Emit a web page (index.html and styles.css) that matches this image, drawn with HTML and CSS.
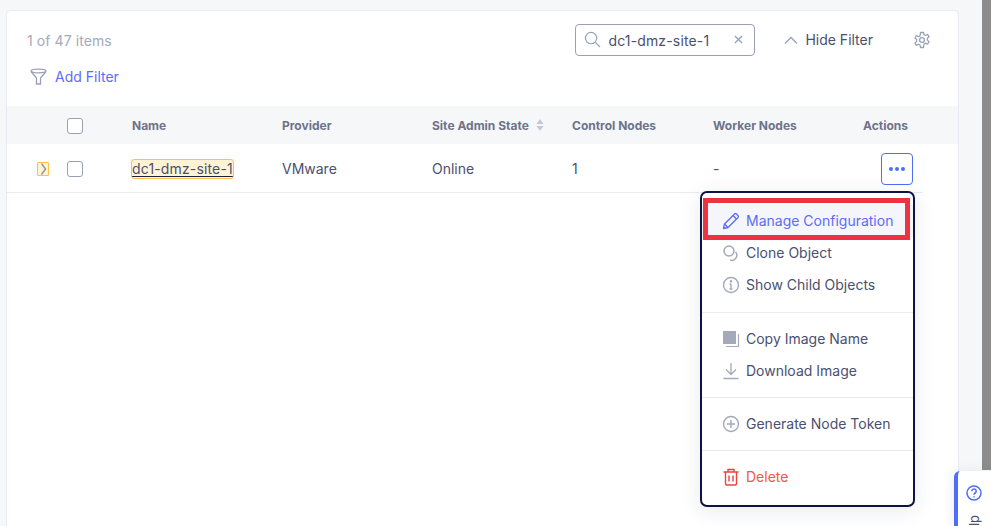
FILE: index.html
```html
<!DOCTYPE html>
<html lang="en">
<head>
    <meta charset="UTF-8">
    <title>Sites</title>
    <link rel="stylesheet" href="styles.css">
</head>
<body>
    <div class="page">
        <div class="card">
            <div class="toolbar">
                <span class="count">1 of 47 items</span>
                <div class="search">
                    <svg class="search-icon" width="17" height="17" viewBox="0 0 18 18" fill="none" stroke="#9aa1b5" stroke-width="1.3"><circle cx="7.5" cy="7.5" r="6"/><path d="M12 12l5 5"/></svg>
                    <span class="search-text">dc1-dmz-site-1</span>
                    <svg class="clear-icon" width="9" height="9" viewBox="0 0 10 10" fill="none" stroke="#9aa1b5" stroke-width="1.5"><path d="M1 1l8 8M9 1l-8 8"/></svg>
                </div>
                <div class="hide-filter">
                    <svg width="14" height="8" viewBox="0 0 14 8" fill="none" stroke="#9aa1b5" stroke-width="1.3"><path d="M1 7.5l6-6 6 6"/></svg>
                    <span>Hide Filter</span>
                </div>
                <svg class="gear" width="18" height="18" viewBox="0 0 24 24" fill="none" stroke="#9aa1b5" stroke-width="1.7" stroke-linejoin="round"><circle cx="12" cy="12" r="3.2"/><path d="M10 2h4l.6 3 2.2 1 2.6-1.600 2 3.400-2.300 2 .1 2.400 2.200 2-2 3.400-2.600-1.500-2.200 1.200L14 22h-4l-.6-3.100-2.200-1.200-2.600 1.500-2-3.400 2.200-2 .1-2.400-2.300-2 2-3.400 2.600 1.600 2.200-1z"/></svg>
            </div>
            <div class="filter-row">
                <svg width="17" height="17" viewBox="0 0 17 17" fill="none" stroke="#9aa1b5" stroke-width="1.3"><ellipse cx="8.500" cy="3" rx="7.500" ry="1.800"/><path d="M1 3.500l5.500 6.500v6h4v-6L16 3.500"/></svg>
                <span class="add-filter">Add Filter</span>
            </div>

            <div class="table-row table-head">
                <span></span>
                <span class="check"></span>
                <span>Name</span>
                <span>Provider</span>
                <span class="sortable">Site Admin State
                    <svg width="8" height="14" viewBox="0 0 8 14" fill="#c3c7d6"><path d="M4 1l3.500 5h-7z"/><path d="M4 13l3.500-5h-7z"/></svg>
                </span>
                <span>Control Nodes</span>
                <span>Worker Nodes</span>
                <span>Actions</span>
            </div>
            <div class="table-row table-body">
                <span class="expand">
                    <svg width="7" height="12" viewBox="0 0 7 12" fill="none" stroke="#9a9a90" stroke-width="1.500"><path d="M1.500 .5l4 5.500-4 5.500"/></svg>
                </span>
                <span class="check"></span>
                <span><span class="name-link">dc1-dmz-site-1</span></span>
                <span>VMware</span>
                <span>Online</span>
                <span>1</span>
                <span>-</span>
                <span class="actions-cell">
                    <button class="more"><i></i><i></i><i></i></button>
                </span>
            </div>
        </div>
        <div class="scrollbar"></div>
    </div>

    <div class="menu">
        <div class="menu-group first">
            <div class="menu-item active">
                <svg width="18" height="18" viewBox="0 0 18 18" fill="none" stroke="#5c6cf5" stroke-width="1.300" stroke-linejoin="round"><path d="M1.500 16.500l1-4.500L12.500 2a1.500 1.500 0 0 1 2 0l1.500 1.500a1.500 1.500 0 0 1 0 2L6 15.500z"/><path d="M2.500 12l3.500 3.500M11 3.500l3.500 3.500"/></svg>
                <span>Manage Configuration</span>
            </div>
            <div class="menu-item">
                <svg width="18" height="18" viewBox="0 0 18 18" fill="none" stroke="#a4a9bb" stroke-width="1.500"><circle cx="7" cy="7" r="5"/><path d="M13.500 8a5 5 0 0 1-5.500 8"/></svg>
                <span>Clone Object</span>
            </div>
            <div class="menu-item">
                <svg width="18" height="18" viewBox="0 0 18 18" fill="none" stroke="#a4a9bb" stroke-width="1.400"><circle cx="9" cy="9" r="7.500"/><path d="M9 8v5M7.500 13h3M7.500 8H9"/><circle cx="9" cy="5.200" r=".6"/></svg>
                <span>Show Child Objects</span>
            </div>
        </div>
        <div class="menu-group">
            <div class="menu-item">
                <svg width="18" height="18" viewBox="0 0 18 18"><rect x="1" y="1" width="13" height="13" fill="#a4a9bb"/><path d="M16.500 4v12.500H4" fill="none" stroke="#a4a9bb" stroke-width="1.200"/></svg>
                <span>Copy Image Name</span>
            </div>
            <div class="menu-item">
                <svg width="18" height="18" viewBox="0 0 18 18" fill="none" stroke="#a4a9bb" stroke-width="1.300"><path d="M9 1v11M4 7.500l5 5 5-5M1.500 16.500h15"/></svg>
                <span>Download Image</span>
            </div>
        </div>
        <div class="menu-group">
            <div class="menu-item">
                <svg width="18" height="18" viewBox="0 0 18 18" fill="none" stroke="#a4a9bb" stroke-width="1.400"><circle cx="9" cy="9" r="7.500"/><path d="M9 5v8M5 9h8"/></svg>
                <span>Generate Node Token</span>
            </div>
        </div>
        <div class="menu-group last">
            <div class="menu-item danger">
                <svg width="18" height="18" viewBox="0 0 18 18" fill="none" stroke="#f0413f" stroke-width="1.400"><path d="M1.500 4h15M6 4V1.500h6V4M3.500 4v11.500a1.500 1.500 0 0 0 1.500 1.500h8a1.500 1.500 0 0 0 1.500-1.500V4M7 7.500v6M11 7.500v6"/></svg>
                <span>Delete</span>
            </div>
        </div>
    </div>

    <div class="help">
        <svg width="16" height="16" viewBox="0 0 16 16" fill="none" stroke="#4f6ef7" stroke-width="1.500"><circle cx="8" cy="8" r="7"/><path d="M5.800 6.200a2.200 2.200 0 1 1 3.400 1.800c-.8.500-1.200 1-1.200 1.800"/><path d="M8 11.300v1.200"/></svg>
        <span class="help-text">Help</span>
    </div>
</body>
</html>
```

FILE: styles.css
```css
*, *::after {
    box-sizing: border-box;
}

html, body {
    height: 100%;
}

body {
    margin: 0;
    overflow: hidden;
    background-color: #fff;
    font-family: "Inter", "Liberation Sans", sans-serif;
    font-size: 14px;
    color: #4a5070;
}

.page {
    display: flex;
    width: 991px;
    height: 100%;
    padding: 10px 0 0 6px;
    background-color: #f6f7f9;
}

.card {
    display: flex;
    flex-direction: column;
    width: 953px;
    background-color: #fff;
    border: 1px solid #e8eaf4;
    border-bottom: none;
    border-radius: 5px 5px 0 0;
}

.scrollbar {
    width: 9px;
    height: 470px;
    margin: -10px 0 0 23px;
    background-color: #8c8c8c;
}

/* barra superior */
.toolbar {
    display: flex;
    align-items: center;
    height: 31px;
    margin-top: 13px;
    padding: 0 27px 0 20px;
}

.count {
    flex: 1;
    margin-top: 2px;
    color: #a4a9bb;
    letter-spacing: .08px;
}

.search {
    display: flex;
    align-items: center;
    width: 180px;
    height: 32px;
    padding: 0 11px 0 8px;
    border: 1px solid #9aa1b5;
    border-radius: 4px;
}

.search-text {
    flex: 1;
    margin-top: 2px;
    margin-left: 7px;
    letter-spacing: .15px;
}

.hide-filter {
    display: flex;
    align-items: center;
    gap: 7px;
    margin-left: 29px;
    margin-right: 40px;
}

.filter-row {
    display: flex;
    align-items: center;
    gap: 8px;
    height: 20px;
    margin-top: 11px;
    padding-left: 23px;
}

.add-filter {
    color: #5c6cf5;
}

/* tabla */
.table-row {
    display: grid;
    grid-template-columns: 40px 65px 150px 150px 140px 141px 150px 1fr;
    align-items: center;
    padding-left: 20px;
}

.table-head {
    height: 38px;
    margin-top: 20px;
    background-color: #f6f7f9;
    font-size: 12px;
    font-weight: 700;
    color: #6d7389;
}

.table-head .check {
    margin-top: 2px;
}

.table-body {
    height: 49px;
    margin-right: 35px;
    border-bottom: 1px solid #e8eaf4;
}

.table-body .check,
.table-body .expand,
.actions-cell {
    margin-top: 2px;
}

.sortable {
    display: flex;
    align-items: center;
    gap: 7px;
}

.check {
    width: 16px;
    height: 16px;
    background-color: #fff;
    border: 1px solid #9aa1b5;
    border-radius: 3px;
}

.expand {
    display: flex;
    align-items: center;
    justify-content: center;
    width: 12px;
    height: 14px;
    margin-left: 10px;
    background-color: #fff3d6;
    border: 1px solid #ffc04d;
    border-radius: 1px;
}

.name-link {
    padding-bottom: 1px;
    background-color: #fff3d6;
    outline: 1px solid #ffc04d;
    border-radius: 2px;
    letter-spacing: .15px;
    text-decoration: underline;
    text-decoration-color: #1a1f3d;
    text-underline-offset: 2px;
}

.actions-cell {
    padding-left: 18px;
}

.more {
    display: flex;
    align-items: center;
    justify-content: center;
    gap: 2px;
    width: 32px;
    height: 32px;
    padding: 0;
    background-color: #fff;
    border: 1px solid #4f6ef7;
    border-radius: 4px;
}

.more i {
    width: 4px;
    height: 4px;
    background-color: #4f6ef7;
    border-radius: 50%;
}

/* menu de acciones */
.menu {
    position: absolute;
    top: 191px;
    left: 700px;
    width: 215px;
    background-color: #fff;
    border: 2px solid #0d1442;
    border-radius: 7px;
    box-shadow: 0 4px 20px rgba(40, 50, 90, 0.1);
}

.menu-group {
    padding: 10px 0;
    border-bottom: 1px solid #e8eaf4;
}

.menu-group.first {
    padding: 12px 0 11px;
}

.menu-group.last {
    padding-bottom: 12px;
    border-bottom: none;
}

.menu-item {
    display: flex;
    align-items: center;
    gap: 6px;
    height: 32px;
    padding-left: 20px;
}

.menu-item span {
    margin-bottom: 2px;
}

.menu-item.active {
    position: relative;
    background-color: #f5f6fb;
    color: #5c6cf5;
}

.menu-item.active::after {
    content: "";
    position: absolute;
    top: -7px;
    left: 1px;
    width: 207px;
    height: 42px;
    border: 5px solid #ee3340;
}

.menu-item.danger {
    color: #f4564e;
}

/* ayuda */
.help {
    position: absolute;
    top: 471px;
    left: 954px;
    bottom: 0;
    display: flex;
    flex-direction: column;
    align-items: center;
    gap: 14px;
    width: 39px;
    padding-top: 14px;
    padding-right: 4px;
    overflow: hidden;
    background-color: #fff;
    border-left: 4px solid #4f6ef7;
    border-radius: 6px 0 0 0;
    box-shadow: -2px 0 12px rgba(40, 50, 90, 0.08);
}

.help svg,
.help-text {
    flex-shrink: 0;
}

.help-text {
    writing-mode: vertical-rl;
    transform: rotate(180deg);
    font-size: 13px;
}
```
